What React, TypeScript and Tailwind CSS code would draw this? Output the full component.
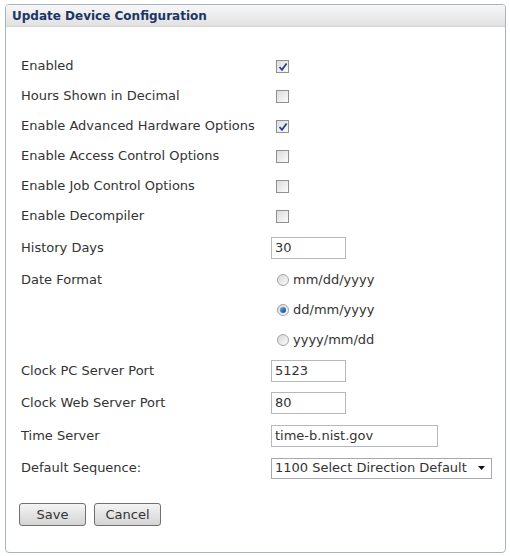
import React from 'react';

const font = { fontFamily: '"DejaVu Sans", Verdana, sans-serif' };

const CheckBox = ({ checked }: { checked?: boolean }) => (
  <span className="ml-[5px] relative inline-block w-[13px] h-[13px] border border-[#8e8f8f] bg-gradient-to-br from-[#dcdcdc] to-[#fbfbfb]">
    {checked && (
      <svg className="absolute left-[1px] top-[1px]" width="10" height="10" viewBox="0 0 10 10">
        <path d="M1.5 5 L4 7.8 L8.6 1.5" fill="none" stroke="#2a3f8f" strokeWidth="1.8" />
      </svg>
    )}
  </span>
);

const Radio = ({ checked, label }: { checked?: boolean; label: string }) => (
  <label className="h-[30px] flex items-center ml-[6px] gap-[4px]">
    <span className="w-[12px] h-[12px] rounded-full border border-[#a4a4a4] bg-gradient-to-br from-[#d8d8d8] to-[#fafafa] flex items-center justify-center">
      {checked && <span className="w-[6px] h-[6px] rounded-full bg-gradient-to-br from-[#6fb0f0] to-[#0c3d8a]" />}
    </span>
    <span>{label}</span>
  </label>
);

const TextBox = ({ value, w }: { value: string; w: string }) => (
  <div className={`${w} h-[22px] border border-[#b4b8bf] bg-white flex items-center px-[3px]`}>{value}</div>
);

const Row = ({ label, h, children }: { label: string; h: string; children: React.ReactNode }) => (
  <div className={`flex items-center ${h}`}>
    <div className="w-[250px]">{label}</div>
    <div className="flex items-center">{children}</div>
  </div>
);

const App = () => {
  return (
    <div className="w-[510px] h-[556px] bg-white pt-[4px] pl-[5px]" style={font}>
      <div className="w-[501px] h-[549px] border border-[#a8b3be] rounded-[4px] overflow-hidden flex flex-col">
        <div className="h-[22px] bg-gradient-to-b from-[#f7f7f7] to-[#e1e1e1] border-b border-[#d2d2d2] flex items-center pl-[6px]">
          <span className="text-[12px] font-bold text-[#1b3566]">Update Device Configuration</span>
        </div>
        <div className="pt-[24px] pl-[15px] text-[13px] text-[#333]">
          <Row label="Enabled" h="h-[30px]"><CheckBox checked /></Row>
          <Row label="Hours Shown in Decimal" h="h-[30px]"><CheckBox /></Row>
          <Row label="Enable Advanced Hardware Options" h="h-[30px]"><CheckBox checked /></Row>
          <Row label="Enable Access Control Options" h="h-[30px]"><CheckBox /></Row>
          <Row label="Enable Job Control Options" h="h-[30px]"><CheckBox /></Row>
          <Row label="Enable Decompiler" h="h-[30px]"><CheckBox /></Row>
          <Row label="History Days" h="h-[34px]"><TextBox value="30" w="w-[75px]" /></Row>
          <div className="flex items-start">
            <div className="w-[250px] h-[30px] flex items-center">Date Format</div>
            <div className="flex flex-col">
              <Radio label="mm/dd/yyyy" />
              <Radio label="dd/mm/yyyy" checked />
              <Radio label="yyyy/mm/dd" />
            </div>
          </div>
          <Row label="Clock PC Server Port" h="h-[31px]"><TextBox value="5123" w="w-[75px]" /></Row>
          <Row label="Clock Web Server Port" h="h-[33px]"><TextBox value="80" w="w-[75px]" /></Row>
          <Row label="Time Server" h="h-[33px]"><TextBox value="time-b.nist.gov" w="w-[167px]" /></Row>
          <Row label="Default Sequence:" h="h-[32px]">
            <div className="w-[221px] h-[21px] border border-[#a5a9b0] bg-white flex items-center justify-between pl-[3px] pr-[6px]">
              <span>1100 Select Direction Default</span>
              <svg width="7" height="4" viewBox="0 0 7 4"><path d="M0 0 H7 L3.5 4 Z" fill="#111" /></svg>
            </div>
          </Row>
          <div className="flex gap-[8px] mt-[19px] -ml-[2px]">
            <button className="w-[67px] h-[23px] border border-[#707070] rounded-[3px] bg-gradient-to-b from-[#f4f4f4] to-[#d4d4d4] text-[13px] text-[#333]">Save</button>
            <button className="w-[67px] h-[23px] border border-[#707070] rounded-[3px] bg-gradient-to-b from-[#f4f4f4] to-[#d4d4d4] text-[13px] text-[#333]">Cancel</button>
          </div>
        </div>
      </div>
    </div>
  );
};

export default App;
